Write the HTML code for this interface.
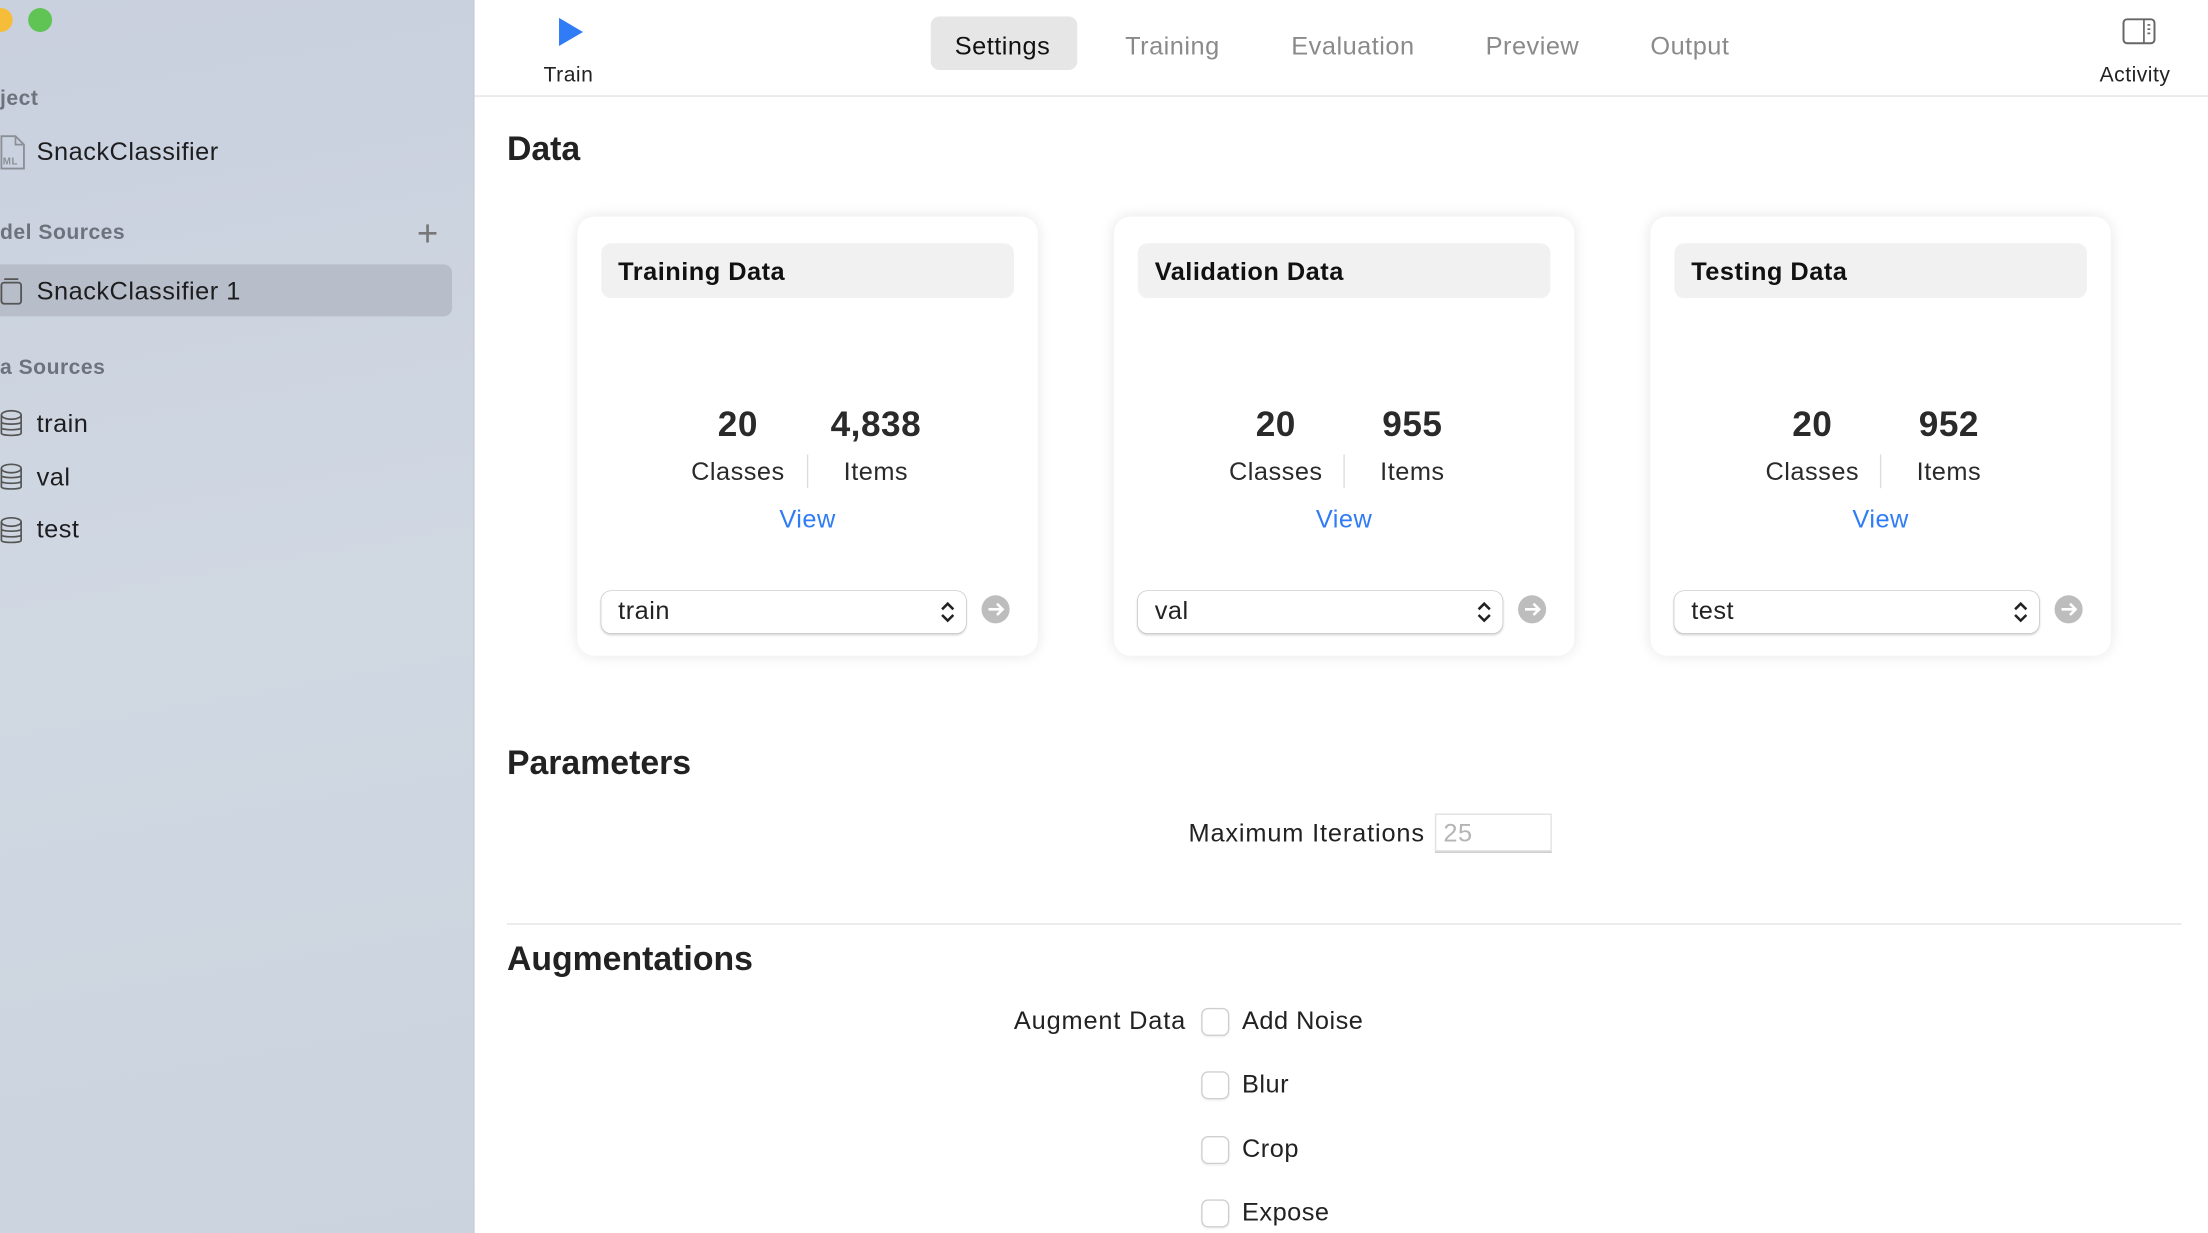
<!DOCTYPE html>
<html><head><meta charset="utf-8"><style>
html,body{margin:0;padding:0;width:2208px;height:1230px;overflow:hidden;background:#fff}
#s{position:absolute;left:0;top:1px;width:1568px;height:874px;transform:scale(1.408163);transform-origin:0 0;font-family:"Liberation Sans",sans-serif;color:#222;letter-spacing:.35px}
.a{position:absolute;white-space:nowrap}
#side{position:absolute;left:0;top:-1px;width:336px;height:876px;background:linear-gradient(170deg,#c9d0de 0%,#d0d8e2 50%,#cbd3df 100%);border-right:1px solid #c4c8cf}
.sh{font-size:15px;color:#6d737c;font-weight:bold}
.si{font-size:18px;color:#1d1d1f}
.card{position:absolute;top:153px;width:327px;height:312px;background:#fff;border-radius:12px;box-shadow:0 0 10px rgba(0,0,0,.10)}
.ch{position:absolute;left:17px;top:19px;width:293px;height:39px;background:#f1f1f1;border-radius:7px;font-weight:bold;font-size:18px;line-height:41px;padding-left:12px;box-sizing:border-box;color:#111}
.num{position:absolute;top:134px;font-size:25px;font-weight:bold;color:#2a2a2a;transform:translateX(-50%)}
.lab{position:absolute;top:171px;font-size:18px;color:#2a2a2a;transform:translateX(-50%)}
.div{position:absolute;left:163px;top:169px;width:1px;height:24px;background:#ddd}
.view{position:absolute;left:0;width:100%;text-align:center;top:205px;font-size:18px;color:#2f7cf6}
.sel{position:absolute;left:17px;top:266px;width:259px;height:30px;border-radius:7px;box-shadow:0 0 0 .5px #c8c8c8,0 1px 2px rgba(0,0,0,.2);font-size:18px;line-height:29px;padding-left:12px;box-sizing:border-box}
.arr{position:absolute;left:287px;top:269px;width:20px;height:20px;border-radius:50%;background:#bdbdbd}
.tab{position:absolute;top:12px;height:38px;line-height:40px;font-size:18px;color:#8a8a8a}
.cb{position:absolute;left:853px;width:18px;height:18px;border:1px solid #cfcfcf;border-radius:5px;box-shadow:0 1px 1px rgba(0,0,0,.05)}
.cl{position:absolute;left:882px;font-size:18px;color:#222}
</style></head><body><div id="s">
<div id="side">
 <div class="a" style="left:-8px;top:6px;width:17px;height:17px;border-radius:50%;background:#f6bd39;"></div>
 <div class="a" style="left:20px;top:6px;width:17px;height:17px;border-radius:50%;background:#5fc453;"></div>
 <div class="a sh" style="left:0;top:62px">ject</div>
 <svg class="a" style="left:0;top:96px" width="20" height="26" viewBox="0 0 20 26"><path d="M1 1H11L17 7V24H1Z" fill="none" stroke="#8b8f96" stroke-width="1.3"/><path d="M11 1V7H17" fill="none" stroke="#8b8f96" stroke-width="1.2"/><text x="2" y="21" font-size="7" font-family="Liberation Sans" fill="#8b8f96" font-weight="bold">ML</text></svg>
 <div class="a si" style="left:26px;top:98px">SnackClassifier</div>
 <div class="a sh" style="left:0;top:157px">del Sources</div>
 <div class="a" style="left:296px;top:151px;font-size:26px;color:#777;font-weight:300">+</div>
 <div class="a" style="left:-10px;top:188px;width:331px;height:37px;background:#b7bec9;border-radius:6px"></div>
 <svg class="a" style="left:0;top:197px" width="18" height="22" viewBox="0 0 18 22"><rect x="1" y="4" width="14" height="15" rx="2" fill="none" stroke="#555" stroke-width="1.3"/><path d="M3 1.5H13" stroke="#555" stroke-width="1.2"/></svg>
 <div class="a si" style="left:26px;top:197px">SnackClassifier 1</div>
 <div class="a sh" style="left:0;top:253px">a Sources</div>
 <svg class="a" style="left:0;top:291px" width="18" height="22" viewBox="0 0 18 22"><ellipse cx="8" cy="4" rx="7" ry="3" fill="none" stroke="#555" stroke-width="1.2"/><path d="M1 4V17C1 19 15 19 15 17V4M1 9C1 11 15 11 15 9M1 13C1 15 15 15 15 13" fill="none" stroke="#555" stroke-width="1.2"/></svg>
 <div class="a si" style="left:26px;top:291px">train</div>
 <svg class="a" style="left:0;top:329px" width="18" height="22" viewBox="0 0 18 22"><ellipse cx="8" cy="4" rx="7" ry="3" fill="none" stroke="#555" stroke-width="1.2"/><path d="M1 4V17C1 19 15 19 15 17V4M1 9C1 11 15 11 15 9M1 13C1 15 15 15 15 13" fill="none" stroke="#555" stroke-width="1.2"/></svg>
 <div class="a si" style="left:26px;top:329px">val</div>
 <svg class="a" style="left:0;top:367px" width="18" height="22" viewBox="0 0 18 22"><ellipse cx="8" cy="4" rx="7" ry="3" fill="none" stroke="#555" stroke-width="1.2"/><path d="M1 4V17C1 19 15 19 15 17V4M1 9C1 11 15 11 15 9M1 13C1 15 15 15 15 13" fill="none" stroke="#555" stroke-width="1.2"/></svg>
 <div class="a si" style="left:26px;top:366px">test</div>
</div>
<div class="a" style="left:337px;top:67px;width:1231px;height:1px;background:#e3e3e3"></div>
<svg class="a" style="left:395px;top:11px" width="20" height="22" viewBox="0 0 20 22"><path d="M2 1L19 11L2 21Z" fill="#2f7cf6"/></svg>
<div class="a" style="left:386px;top:44px;font-size:15px;color:#222">Train</div>
<div class="a" style="left:661px;top:11px;width:104px;height:38px;background:#e6e6e6;border-radius:6px"></div>
<div class="tab" style="left:678px;color:#111">Settings</div>
<div class="tab" style="left:799px">Training</div>
<div class="tab" style="left:917px">Evaluation</div>
<div class="tab" style="left:1055px">Preview</div>
<div class="tab" style="left:1172px">Output</div>
<svg class="a" style="left:1507px;top:12px" width="25" height="20" viewBox="0 0 25 20"><rect x="1" y="1" width="22" height="17" rx="2.5" fill="none" stroke="#666" stroke-width="1.4"/><path d="M15.5 1V18M18 5H20M18 8H20M18 11H20" stroke="#666" stroke-width="1.2"/></svg>
<div class="a" style="left:1491px;top:44px;font-size:15px;color:#222">Activity</div>
<div class="a" style="left:360px;top:92px;font-size:24px;font-weight:bold;color:#222;letter-spacing:0">Data</div>

<div class="card" style="left:410px"><div class="ch">Training Data</div>
<div class="num" style="left:114px">20</div><div class="num" style="left:212px">4,838</div>
<div class="lab" style="left:114px">Classes</div><div class="div"></div><div class="lab" style="left:212px">Items</div>
<div class="view">View</div>
<div class="sel">train<svg style="position:absolute;right:8px;top:7px" width="10" height="16" viewBox="0 0 10 16"><path d="M1 6L5 2L9 6M1 10L5 14L9 10" fill="none" stroke="#222" stroke-width="1.8"/></svg></div>
<div class="arr"><svg width="20" height="20" viewBox="0 0 20 20"><path d="M5 10H15M11 6L15 10L11 14" fill="none" stroke="#fff" stroke-width="1.8"/></svg></div></div>

<div class="card" style="left:791px"><div class="ch">Validation Data</div>
<div class="num" style="left:115px">20</div><div class="num" style="left:212px">955</div>
<div class="lab" style="left:115px">Classes</div><div class="div"></div><div class="lab" style="left:212px">Items</div>
<div class="view">View</div>
<div class="sel">val<svg style="position:absolute;right:8px;top:7px" width="10" height="16" viewBox="0 0 10 16"><path d="M1 6L5 2L9 6M1 10L5 14L9 10" fill="none" stroke="#222" stroke-width="1.8"/></svg></div>
<div class="arr"><svg width="20" height="20" viewBox="0 0 20 20"><path d="M5 10H15M11 6L15 10L11 14" fill="none" stroke="#fff" stroke-width="1.8"/></svg></div></div>

<div class="card" style="left:1172px"><div class="ch">Testing Data</div>
<div class="num" style="left:115px">20</div><div class="num" style="left:212px">952</div>
<div class="lab" style="left:115px">Classes</div><div class="div"></div><div class="lab" style="left:212px">Items</div>
<div class="view">View</div>
<div class="sel">test<svg style="position:absolute;right:8px;top:7px" width="10" height="16" viewBox="0 0 10 16"><path d="M1 6L5 2L9 6M1 10L5 14L9 10" fill="none" stroke="#222" stroke-width="1.8"/></svg></div>
<div class="arr"><svg width="20" height="20" viewBox="0 0 20 20"><path d="M5 10H15M11 6L15 10L11 14" fill="none" stroke="#fff" stroke-width="1.8"/></svg></div></div>

<div class="a" style="left:360px;top:528px;font-size:24px;font-weight:bold;color:#222;letter-spacing:0">Parameters</div>
<div class="a" style="left:844px;top:581px;font-size:18px;letter-spacing:.6px">Maximum Iterations</div>
<div class="a" style="left:1019px;top:577px;width:83px;height:27px;border:1px solid #e2e2e2;box-shadow:0 1px 0 #ccc;box-sizing:border-box;font-size:18px;color:#b5b5b5;line-height:27px;padding-left:5px">25</div>
<div class="a" style="left:360px;top:655px;width:1189px;height:1px;background:#e3e3e3"></div>
<div class="a" style="left:360px;top:667px;font-size:24px;font-weight:bold;color:#222;letter-spacing:0">Augmentations</div>
<div class="a" style="left:720px;top:714px;font-size:18px;letter-spacing:.6px">Augment Data</div>
<div class="cb" style="top:715px"></div><div class="cl" style="top:714px">Add Noise</div>
<div class="cb" style="top:760px"></div><div class="cl" style="top:759px">Blur</div>
<div class="cb" style="top:806px"></div><div class="cl" style="top:805px">Crop</div>
<div class="cb" style="top:851px"></div><div class="cl" style="top:850px">Expose</div>
</div></body></html>
